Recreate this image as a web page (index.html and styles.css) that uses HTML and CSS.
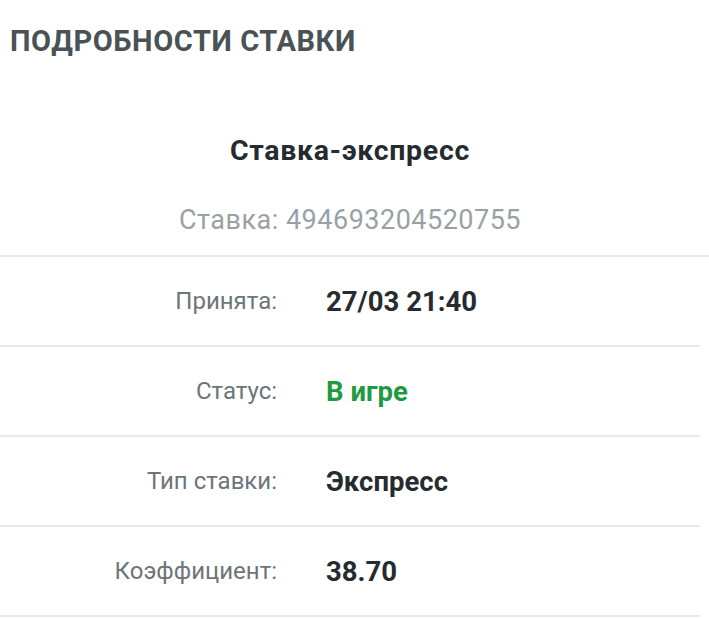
FILE: index.html
```html
<!DOCTYPE html>
<html lang="ru">
<head>
<meta charset="utf-8">
<link rel="stylesheet" href="styles.css">
</head>
<body>
<div class="page">
  <h1 class="title">ПОДРОБНОСТИ СТАВКИ</h1>
  <div class="summary">
    <div class="bet-type">Ставка-экспресс</div>
    <div class="bet-id">Ставка: 494693204520755</div>
  </div>
  <div class="rows">
    <div class="row row-full">
      <div class="label">Принята:</div>
      <div class="value">27/03 21:40</div>
    </div>
    <div class="row">
      <div class="label">Статус:</div>
      <div class="value green">В игре</div>
    </div>
    <div class="row">
      <div class="label">Тип ставки:</div>
      <div class="value">Экспресс</div>
    </div>
    <div class="row">
      <div class="label">Коэффициент:</div>
      <div class="value">38.70</div>
    </div>
    <div class="row row-last"></div>
  </div>
</div>
</body>
</html>
```
FILE: styles.css
```css
html, body {
  margin: 0;
  padding: 0;
  background: #ffffff;
}
.page {
  width: 709px;
  font-family: Roboto, "Noto Sans", Arial, sans-serif;
}
.title {
  margin: 0;
  padding: 24px 0 0 10px;
  height: 110px;
  box-sizing: border-box;
  font-size: 29px;
  line-height: 34px;
  font-weight: 700;
  color: #495257;
  letter-spacing: 0.6px;
}
.summary {
  display: flex;
  flex-direction: column;
  align-items: center;
  height: 145px;
  box-sizing: border-box;
  padding-top: 21px;
  margin-right: 9px;
}
.bet-type {
  font-size: 28.5px;
  font-weight: 700;
  color: #262b2f;
  line-height: 40px;
  letter-spacing: 0.7px;
}
.bet-id {
  margin-top: 29px;
  font-size: 27px;
  color: #9aa1a6;
  line-height: 40px;
  letter-spacing: 0.5px;
}
.rows {
  display: flex;
  flex-direction: column;
}
.row {
  display: flex;
  align-items: center;
  height: 90px;
  box-sizing: border-box;
  border-top: 2px solid #e8eaea;
  margin-right: 9px;
}
.row-full {
  margin-right: 0;
}
.row-last {
  height: 10px;
}
.label {
  width: 277px;
  text-align: right;
  font-size: 24px;
  color: #6d757a;
}
.value {
  margin-left: 49px;
  font-size: 27.5px;
  font-weight: 700;
  color: #262b2f;
}
.green {
  color: #1e9a3f;
}
```
